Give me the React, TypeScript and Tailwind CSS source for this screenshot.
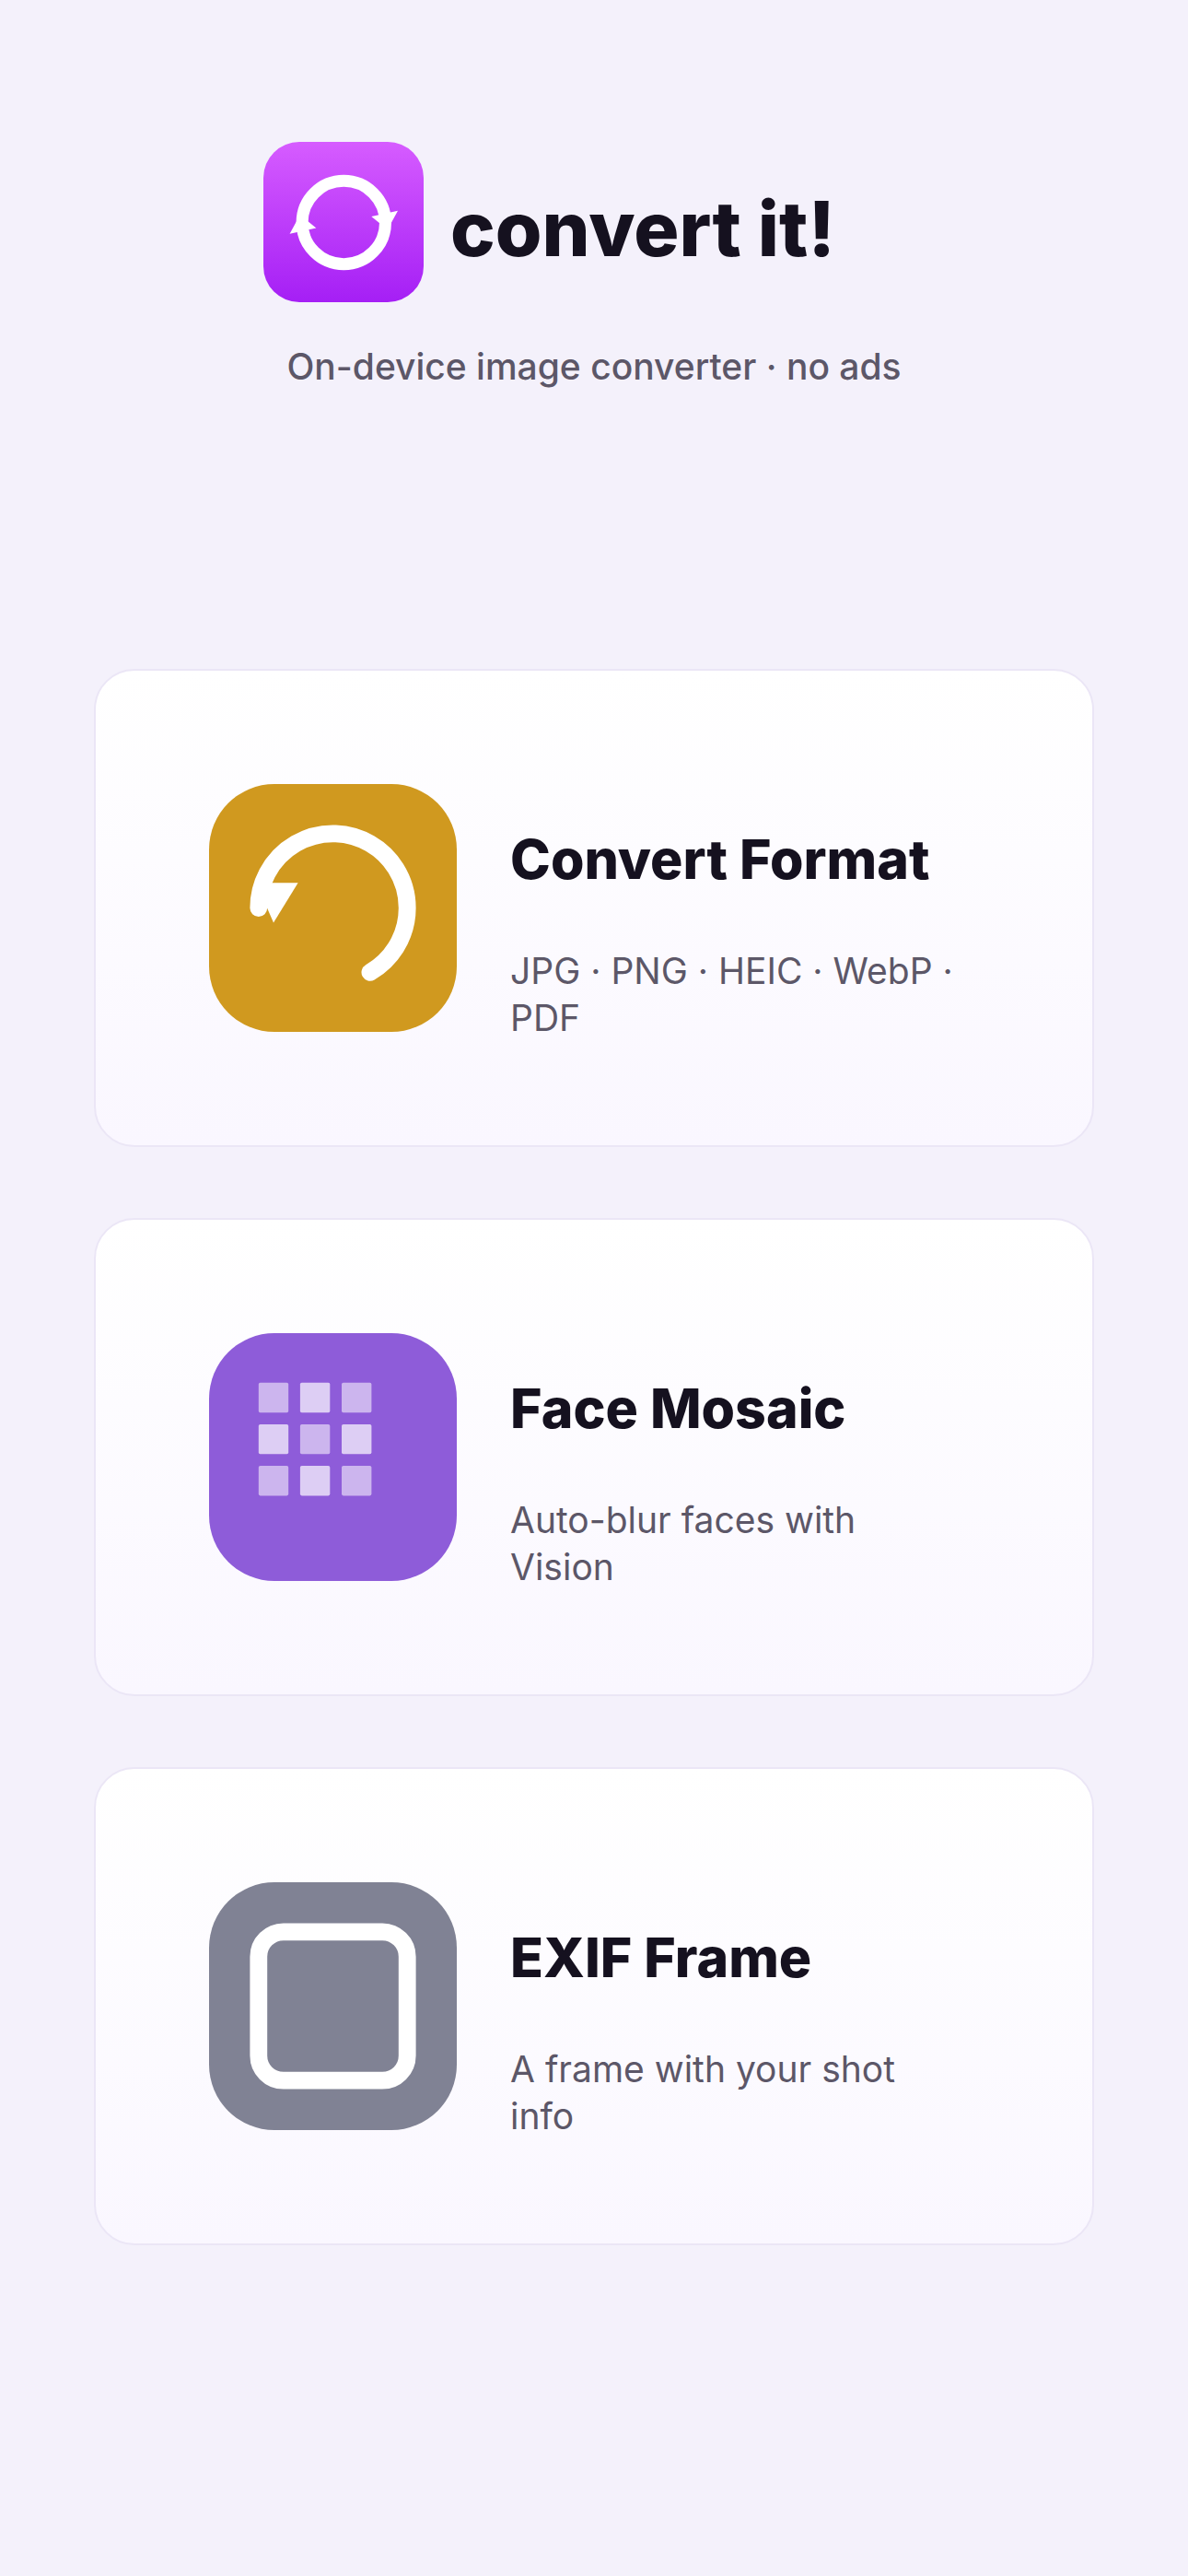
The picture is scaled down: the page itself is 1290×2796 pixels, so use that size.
import type { ReactNode } from 'react';

interface Feature {
  id: string;
  title: string;
  description: string;
  icon: ReactNode;
}

const MOSAIC_STEPS = [0, 1, 2];

function LogoIcon() {
  return (
    <svg viewBox="0 0 174 174" className="size-[174px] shrink-0" aria-hidden="true">
      <defs>
        <linearGradient id="logo-bg" x1="0" y1="0" x2="0" y2="1">
          <stop offset="0" stopColor="#d65cff" />
          <stop offset="1" stopColor="#a51ff5" />
        </linearGradient>
      </defs>
      <rect width="174" height="174" rx="39" fill="url(#logo-bg)" />
      <circle cx="87.3" cy="87.5" r="45.2" fill="none" stroke="#fff" strokeWidth="13" />
      <path d="M146 74.7 117.3 81l17.5 14.3Z" fill="#fff" />
      <path d="M28.6 99.8 57.3 93.6 39.8 79.2Z" fill="#fff" />
    </svg>
  );
}

function ConvertIcon() {
  return (
    <svg viewBox="0 0 269 269" className="size-[269px] shrink-0" aria-hidden="true">
      <rect width="269" height="269" rx="71" fill="#d0991f" />
      <path
        d="M53.8 134.5a80.7 80.7 0 1 1 121.1 69.9"
        fill="none"
        stroke="#fff"
        strokeWidth="18.8"
        strokeLinecap="round"
      />
      <path d="M51.2 107.2h45.4L70 150.4Z" fill="#fff" />
    </svg>
  );
}

function MosaicIcon() {
  return (
    <svg viewBox="0 0 269 269" className="size-[269px] shrink-0" aria-hidden="true">
      <rect width="269" height="269" rx="71" fill="#8e5cd9" />
      {MOSAIC_STEPS.map((row) =>
        MOSAIC_STEPS.map((col) => (
          <rect
            key={`${row}-${col}`}
            x={53.8 + col * 45.1}
            y={53.8 + row * 45.1}
            width="32.4"
            height="32.4"
            rx="1.8"
            fill="#fff"
            opacity={(row + col) % 2 === 0 ? 0.55 : 0.7}
          />
        )),
      )}
    </svg>
  );
}

function FrameIcon() {
  return (
    <svg viewBox="0 0 269 269" className="size-[269px] shrink-0" aria-hidden="true">
      <rect width="269" height="269" rx="71" fill="#808294" />
      <rect
        x="53.8"
        y="53.8"
        width="161.4"
        height="161.4"
        rx="27"
        fill="none"
        stroke="#fff"
        strokeWidth="18.8"
      />
    </svg>
  );
}

const features: Feature[] = [
  {
    id: 'convert',
    title: 'Convert Format',
    description: 'JPG · PNG · HEIC · WebP · PDF',
    icon: <ConvertIcon />,
  },
  {
    id: 'mosaic',
    title: 'Face Mosaic',
    description: 'Auto-blur faces with Vision',
    icon: <MosaicIcon />,
  },
  {
    id: 'frame',
    title: 'EXIF Frame',
    description: 'A frame with your shot info',
    icon: <FrameIcon />,
  },
];

function FeatureCard({ title, description, icon }: Omit<Feature, 'id'>) {
  return (
    <button
      type="button"
      className="flex w-full items-center gap-[58px] rounded-[44px] border-2 border-[#ebe6f6] bg-linear-to-b from-white to-[#faf7ff] py-[113px] pr-[150px] pl-[123px] text-left"
    >
      {icon}
      <span className="flex min-w-0 flex-1 flex-col gap-[59px] pt-14">
        <span className="text-[59px] leading-[72px] font-extrabold text-[#15111f]">{title}</span>
        <span className="text-[39px] leading-[51px] text-[#5c5768]">{description}</span>
      </span>
    </button>
  );
}

export default function App() {
  return (
    <div className="min-h-screen bg-[#f4f1fb] px-[102px] pt-[154px] pb-20 font-['Inter',sans-serif]">
      <header className="flex flex-col items-center gap-11">
        <div className="flex w-full max-w-[718px] items-center gap-[29px]">
          <LogoIcon />
          <h1 className="pt-4 text-[82px] leading-[104px] font-extrabold text-[#15111f]">
            convert it!
          </h1>
        </div>
        <p className="text-[39px] leading-[52px] font-medium text-[#5c5768]">
          On-device image converter · no ads
        </p>
      </header>

      <main className="mt-[302px] flex flex-col gap-[77px]">
        {features.map((feature) => (
          <FeatureCard
            key={feature.id}
            title={feature.title}
            description={feature.description}
            icon={feature.icon}
          />
        ))}
      </main>
    </div>
  );
}
